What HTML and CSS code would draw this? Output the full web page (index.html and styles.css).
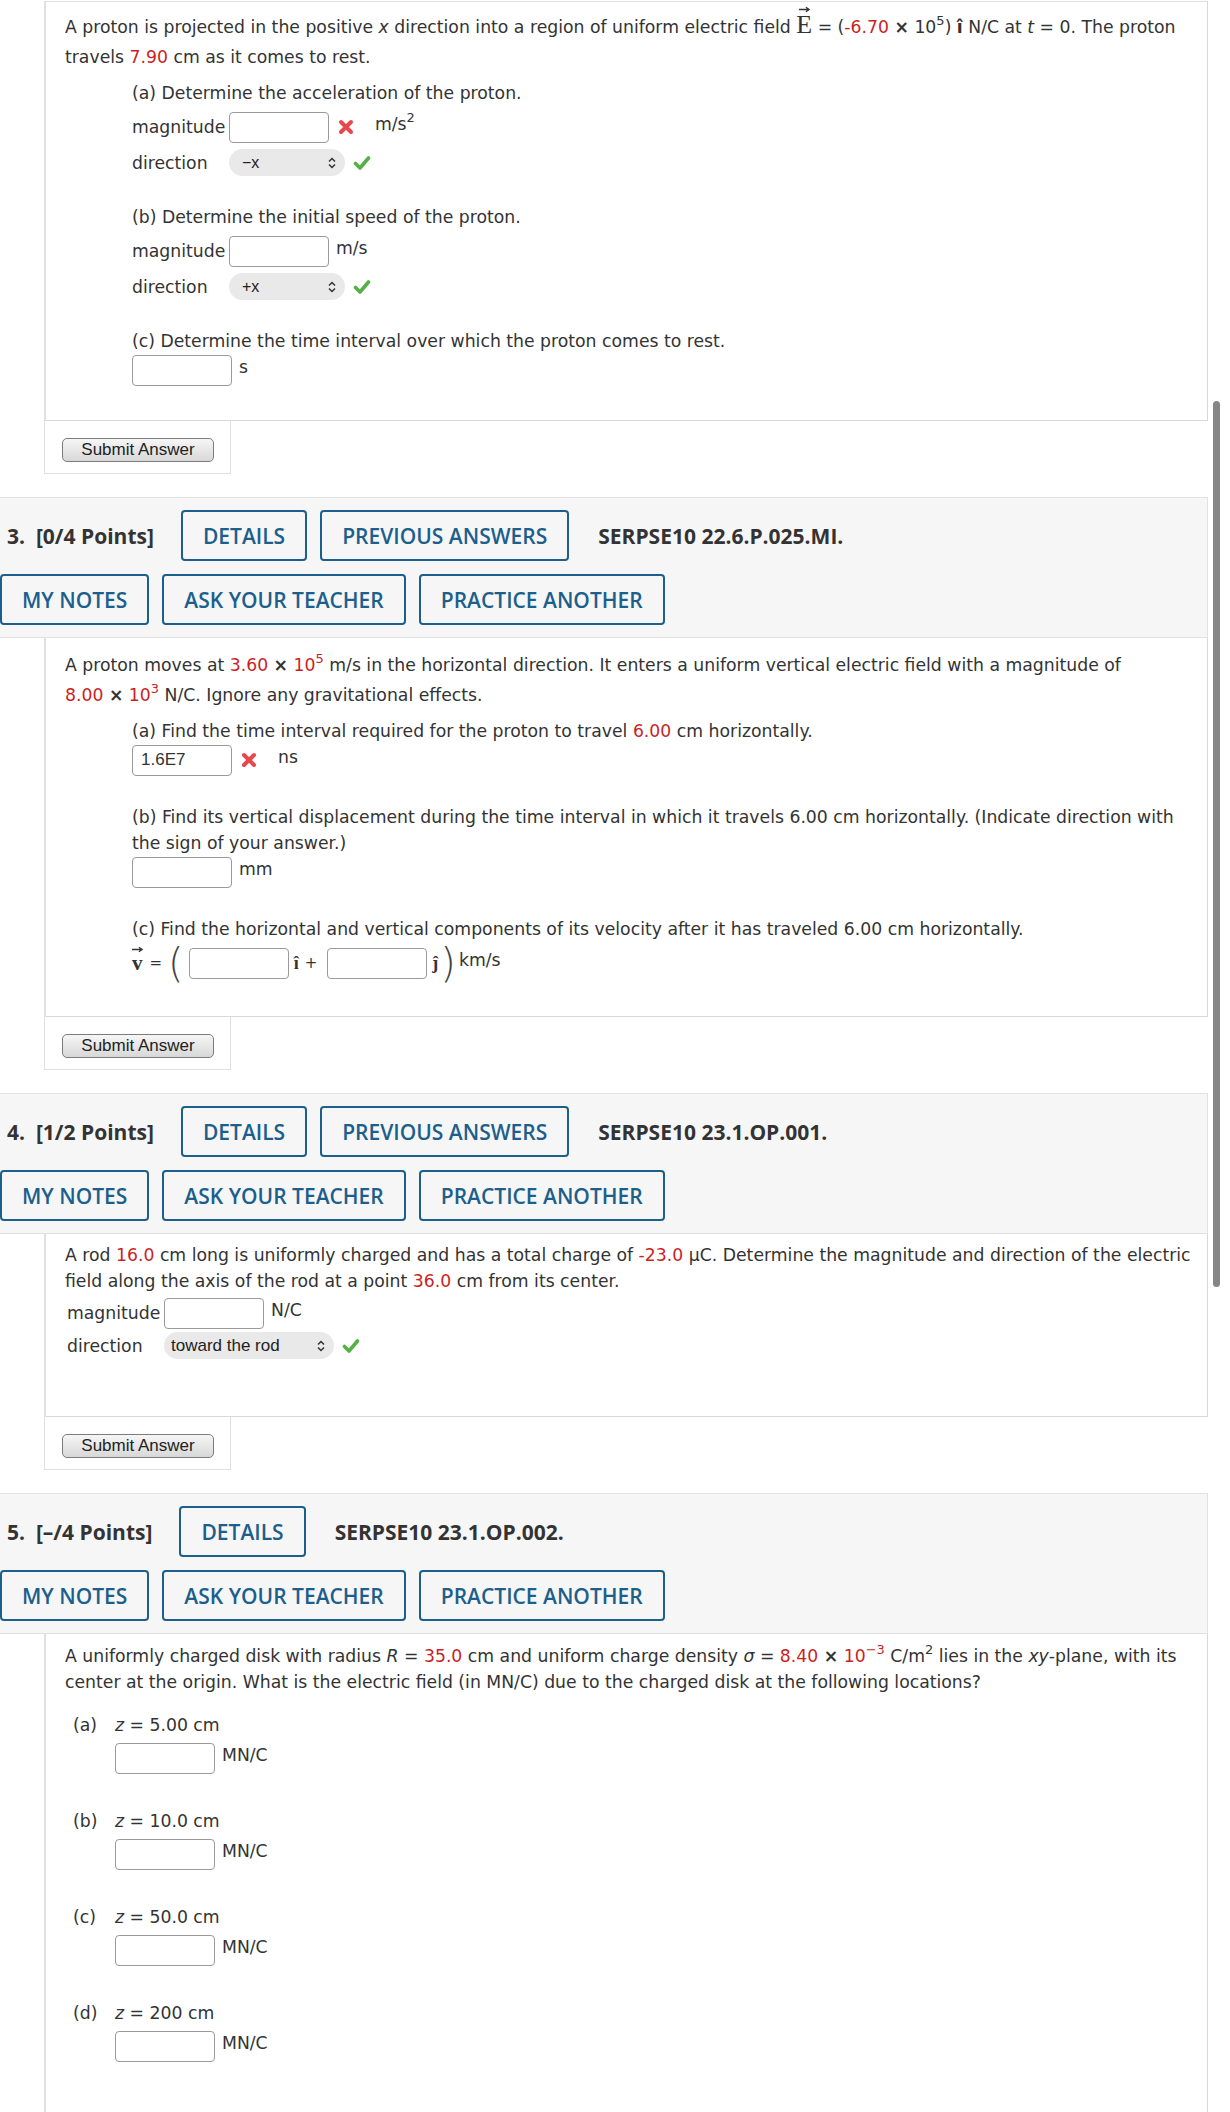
FILE: index.html
```html
<!DOCTYPE html>
<html lang="en">
<head>
  <meta charset="UTF-8">
  <meta name="viewport" content="width=device-width, initial-scale=1.0">
  <title>Assignment</title>
  <link rel="stylesheet" href="styles.css">
</head>
<body>
  <div class="page">
    <div class="scrollbar"></div>

    <!-- question 2 (continued) -->
    <div class="qbody first">
      <p class="stem tall">A proton is projected in the positive <i>x</i> direction into a region of uniform electric field <span class="vec vec-e">E<svg class="arrow" viewBox="0 0 14 7"><path d="M1 3.5h11M8.5 1l3.5 2.5-3.5 2.5"/></svg></span> = (<span class="val">-6.70</span> <b class="times">×</b> 10<sup>5</sup>) <b class="hat">î</b> N/C at <i>t</i> = 0. The proton travels <span class="val">7.90</span> cm as it comes to rest.</p>

      <div class="part">
        <p>(a) Determine the acceleration of the proton.</p>
        <div class="fields">
          <div class="field-row">
            <span class="field-label">magnitude</span>
            <input class="answer" type="text">
            <svg class="mark" viewBox="0 0 18 18"><path class="wrong" d="M4 4l10 10M14 4L4 14"/></svg>
            <span class="unit after-mark">m/s<sup>2</sup></span>
          </div>
          <div class="field-row">
            <span class="field-label">direction</span>
            <span class="select narrow">−x<svg class="chev" viewBox="0 0 10 14"><path d="M2 5.5l3-3 3 3M2 8.5l3 3 3-3"/></svg></span>
            <svg class="mark" viewBox="0 0 18 18"><path class="right" d="M2.5 9.5l4.5 4.5 8.5-10"/></svg>
          </div>
        </div>
      </div>

      <div class="part">
        <p>(b) Determine the initial speed of the proton.</p>
        <div class="fields">
          <div class="field-row">
            <span class="field-label">magnitude</span>
            <input class="answer" type="text">
            <span class="unit">m/s</span>
          </div>
          <div class="field-row">
            <span class="field-label">direction</span>
            <span class="select narrow">+x<svg class="chev" viewBox="0 0 10 14"><path d="M2 5.5l3-3 3 3M2 8.5l3 3 3-3"/></svg></span>
            <svg class="mark" viewBox="0 0 18 18"><path class="right" d="M2.5 9.5l4.5 4.5 8.5-10"/></svg>
          </div>
        </div>
      </div>

      <div class="part">
        <p>(c) Determine the time interval over which the proton comes to rest.</p>
        <div class="answer-line">
          <input class="answer" type="text">
          <span class="unit">s</span>
        </div>
      </div>
    </div>
    <div class="submit-tab"><button class="submit-btn">Submit Answer</button></div>

    <!-- question 3 -->
    <div class="qhead">
      <div class="head-row">
        <span class="points">3.  [0/4 Points]</span>
        <button class="btn-link">DETAILS</button>
        <button class="btn-link">PREVIOUS ANSWERS</button>
        <span class="code">SERPSE10 22.6.P.025.MI.</span>
      </div>
      <div class="head-row">
        <button class="btn-link">MY NOTES</button>
        <button class="btn-link">ASK YOUR TEACHER</button>
        <button class="btn-link">PRACTICE ANOTHER</button>
      </div>
    </div>
    <div class="qbody">
      <p class="stem tall">A proton moves at <span class="val">3.60 <b class="times">×</b> 10<sup>5</sup></span> m/s in the horizontal direction. It enters a uniform vertical electric field with a magnitude of <span class="val">8.00 <b class="times">×</b> 10<sup>3</sup></span> N/C. Ignore any gravitational effects.</p>

      <div class="part">
        <p>(a) Find the time interval required for the proton to travel <span class="val">6.00</span> cm horizontally.</p>
        <div class="answer-line">
          <input class="answer" type="text" value="1.6E7">
          <svg class="mark" viewBox="0 0 18 18"><path class="wrong" d="M4 4l10 10M14 4L4 14"/></svg>
          <span class="unit after-mark">ns</span>
        </div>
      </div>

      <div class="part">
        <p>(b) Find its vertical displacement during the time interval in which it travels 6.00 cm horizontally. (Indicate direction with the sign of your answer.)</p>
        <div class="answer-line">
          <input class="answer" type="text">
          <span class="unit">mm</span>
        </div>
      </div>

      <div class="part">
        <p>(c) Find the horizontal and vertical components of its velocity after it has traveled 6.00 cm horizontally.</p>
        <div class="vector-line">
          <span class="vec vec-v">v<svg class="arrow" viewBox="0 0 14 7"><path d="M1 3.5h11M8.5 1l3.5 2.5-3.5 2.5"/></svg></span>
          <span class="eq">=</span>
          <span class="paren">(</span>
          <input class="answer" type="text">
          <b class="hat">î</b>
          <span class="plus">+</span>
          <input class="answer" type="text">
          <b class="hat">ĵ</b>
          <span class="paren close">)</span>
          <span class="unit">km/s</span>
        </div>
      </div>
    </div>
    <div class="submit-tab"><button class="submit-btn">Submit Answer</button></div>

    <!-- question 4 -->
    <div class="qhead">
      <div class="head-row">
        <span class="points">4.  [1/2 Points]</span>
        <button class="btn-link">DETAILS</button>
        <button class="btn-link">PREVIOUS ANSWERS</button>
        <span class="code">SERPSE10 23.1.OP.001.</span>
      </div>
      <div class="head-row">
        <button class="btn-link">MY NOTES</button>
        <button class="btn-link">ASK YOUR TEACHER</button>
        <button class="btn-link">PRACTICE ANOTHER</button>
      </div>
    </div>
    <div class="qbody roomy">
      <p class="stem">A rod <span class="val">16.0</span> cm long is uniformly charged and has a total charge of <span class="val">-23.0</span> μC. Determine the magnitude and direction of the electric field along the axis of the rod at a point <span class="val">36.0</span> cm from its center.</p>
      <div class="fields flat">
        <div class="field-row">
          <span class="field-label">magnitude</span>
          <input class="answer" type="text">
          <span class="unit">N/C</span>
        </div>
        <div class="field-row">
          <span class="field-label">direction</span>
          <span class="select wide">toward the rod<svg class="chev" viewBox="0 0 10 14"><path d="M2 5.5l3-3 3 3M2 8.5l3 3 3-3"/></svg></span>
          <svg class="mark" viewBox="0 0 18 18"><path class="right" d="M2.5 9.5l4.5 4.5 8.5-10"/></svg>
        </div>
      </div>
    </div>
    <div class="submit-tab"><button class="submit-btn">Submit Answer</button></div>

    <!-- question 5 -->
    <div class="qhead">
      <div class="head-row">
        <span class="points">5.  [–/4 Points]</span>
        <button class="btn-link">DETAILS</button>
        <span class="code">SERPSE10 23.1.OP.002.</span>
      </div>
      <div class="head-row">
        <button class="btn-link">MY NOTES</button>
        <button class="btn-link">ASK YOUR TEACHER</button>
        <button class="btn-link">PRACTICE ANOTHER</button>
      </div>
    </div>
    <div class="qbody last">
      <p class="stem">A uniformly charged disk with radius <i>R</i> = <span class="val">35.0</span> cm and uniform charge density <i>σ</i> = <span class="val">8.40 <b class="times">×</b> 10<sup>−3</sup></span> C/m<sup>2</sup> lies in the <i>xy</i>-plane, with its center at the origin. What is the electric field (in MN/C) due to the charged disk at the following locations?</p>

      <div class="loc">
        <span class="loc-label">(a)</span>
        <div>
          <p><i>z</i> = 5.00 cm</p>
          <div class="answer-line"><input class="answer" type="text"><span class="unit">MN/C</span></div>
        </div>
      </div>
      <div class="loc">
        <span class="loc-label">(b)</span>
        <div>
          <p><i>z</i> = 10.0 cm</p>
          <div class="answer-line"><input class="answer" type="text"><span class="unit">MN/C</span></div>
        </div>
      </div>
      <div class="loc">
        <span class="loc-label">(c)</span>
        <div>
          <p><i>z</i> = 50.0 cm</p>
          <div class="answer-line"><input class="answer" type="text"><span class="unit">MN/C</span></div>
        </div>
      </div>
      <div class="loc">
        <span class="loc-label">(d)</span>
        <div>
          <p><i>z</i> = 200 cm</p>
          <div class="answer-line"><input class="answer" type="text"><span class="unit">MN/C</span></div>
        </div>
      </div>
    </div>
  </div>
</body>
</html>
```

FILE: styles.css
```css
body {
  margin: 0;
  background: #fff;
  color: #333;
  font-family: "DejaVu Sans", Verdana, sans-serif;
  font-size: 17.25px;
}
p {
  margin: 0;
}
.page {
  position: relative;
  width: 1208px;
  padding-top: 1px;
}
.scrollbar {
  position: absolute;
  left: 1213px;
  top: 401px;
  width: 7px;
  height: 886px;
  background: #868686;
  border-radius: 4px;
}

/* question body */
.qbody {
  margin-left: 44px;
  border-left: 2px solid #e0e0e0;
  border-right: 1px solid #d8d8d8;
  border-bottom: 1px solid #d8d8d8;
  padding: 12px 12px 32px 19px;
  line-height: 26px;
}
.qbody.first {
  border-top: 1px solid #e0e0e0;
  padding-top: 10px;
  padding-bottom: 34px;
}
.qbody.roomy {
  padding-top: 8px;
  padding-bottom: 57px;
}
.qbody.last {
  padding-top: 9px;
  padding-bottom: 60px;
  border-bottom: 0;
}
.stem.tall {
  line-height: 30px;
}
.val {
  color: #cc1f1f;
  white-space: nowrap;
}
.times {
  color: #333;
}
sup {
  font-size: 13px;
  line-height: 0;
  vertical-align: 8px;
}
.hat {
  font-weight: bold;
}
.vec {
  position: relative;
  display: inline-block;
  font-family: "Liberation Serif", "Times New Roman", serif;
  line-height: 1;
}
.vec .arrow {
  position: absolute;
  left: 50%;
  width: 13px;
  height: 7px;
  margin-left: -6px;
  fill: none;
  stroke: #333;
  stroke-width: 1.4;
}
.vec-e {
  font-size: 26px;
}
.vec-e .arrow {
  top: -6px;
}
.vec-v {
  font-size: 21px;
  font-weight: bold;
}
.vec-v .arrow {
  top: -7px;
}

/* parts */
.part {
  padding-left: 67px;
  margin-top: 28px;
}
.stem + .part {
  margin-top: 8px;
}
.fields {
  margin-top: 5px;
}
.fields.flat {
  margin: 3px 0 0 2px;
}
.field-row {
  display: flex;
  align-items: center;
}
.field-row + .field-row {
  margin-top: 6px;
}
.fields.flat .field-row + .field-row {
  margin-top: 3px;
}
.field-label {
  width: 97px;
}
.answer-line {
  display: flex;
  align-items: center;
}
.answer {
  width: 100px;
  height: 31px;
  box-sizing: border-box;
  border: 1px solid #9a9a9a;
  border-radius: 4px;
  padding: 0 8px;
  font-family: "Liberation Sans", Arial, sans-serif;
  font-size: 17px;
  color: #333;
  background: #fff;
}
.unit {
  margin-left: 7px;
  margin-bottom: 6px;
}
.unit.after-mark {
  margin-left: 20px;
}
.mark {
  width: 18px;
  height: 18px;
  margin-left: 8px;
}
.mark path {
  fill: none;
  stroke-linecap: round;
  stroke-linejoin: round;
}
.mark .wrong {
  stroke: #e8484c;
  stroke-width: 4;
}
.mark .right {
  stroke: #55b045;
  stroke-width: 3.6;
}
.select {
  display: flex;
  align-items: center;
  justify-content: space-between;
  height: 27px;
  box-sizing: border-box;
  padding: 0 8px 0 13px;
  border-radius: 14px;
  background: #e9e9e9;
  font-family: "Liberation Sans", Arial, sans-serif;
  font-size: 16px;
  color: #222;
}
.select.narrow {
  width: 116px;
}
.select.wide {
  width: 170px;
  padding-left: 7px;
  font-size: 17px;
}
.chev {
  width: 10px;
  height: 14px;
  fill: none;
  stroke: #333;
  stroke-width: 1.5;
}

/* vector answer */
.vector-line {
  display: flex;
  align-items: center;
  height: 42px;
}
.eq {
  margin-left: 7px;
  font-size: 15px;
}
.paren {
  margin: 0 5px 0 6px;
  font-size: 40px;
  font-weight: 200;
  line-height: 42px;
  color: #444;
}
.paren.close {
  margin: 0 0 0 2px;
}
.vector-line .hat {
  margin-left: 5px;
  font-family: "Liberation Serif", serif;
  font-size: 18px;
}
.plus {
  margin: 0 10px 0 6px;
  font-size: 15px;
}
.vector-line .unit {
  margin-left: 3px;
}

/* disk locations */
.loc {
  display: flex;
  margin: 34px 0 0 8px;
}
.stem + .loc {
  margin-top: 17px;
}
.loc-label {
  width: 42px;
}
.loc .answer-line {
  margin-top: 4px;
}

/* submit */
.submit-tab {
  margin-left: 44px;
  width: 187px;
  box-sizing: border-box;
  border: 1px solid #e0e0e0;
  border-top: 0;
  padding: 17px 0 11px 17px;
}
.submit-btn {
  width: 152px;
  height: 24px;
  padding: 0;
  border: 1px solid #7c7c7c;
  border-radius: 5px;
  background: linear-gradient(#f6f6f6, #d8d8d8);
  font-family: "Liberation Sans", Arial, sans-serif;
  font-size: 17px;
  color: #222;
}

/* question header */
.qhead {
  margin-top: 23px;
  padding: 12px 0;
  background: #f6f6f6;
  border: 1px solid #e2e2e2;
  border-left: 0;
  font-family: "Open Sans", sans-serif;
}
.head-row {
  display: flex;
  align-items: center;
  gap: 13px;
}
.head-row + .head-row {
  margin-top: 13px;
}
.points {
  padding-left: 7px;
  margin-right: 14px;
  font-size: 21px;
  font-weight: 700;
  color: #333;
  white-space: pre;
}
.btn-link {
  display: flex;
  align-items: center;
  height: 51px;
  box-sizing: border-box;
  padding: 0 20px;
  border: 2px solid #1d5f8c;
  border-radius: 4px;
  background: transparent;
  font-family: "Open Sans", sans-serif;
  font-size: 21px;
  font-weight: 600;
  color: #1d5f8c;
}
.code {
  margin-left: 16px;
  font-size: 21px;
  font-weight: 700;
  color: #333;
}
```
